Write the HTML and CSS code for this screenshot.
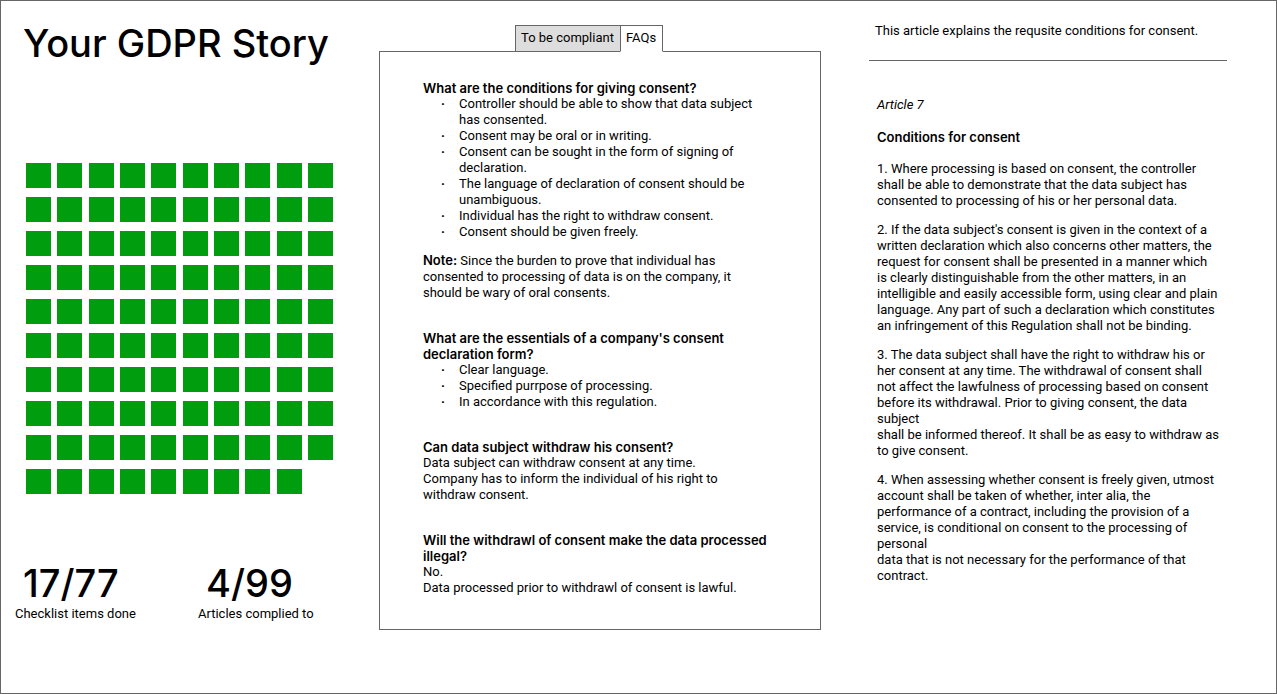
FILE: index.html
```
<!DOCTYPE html>
<html lang="en">
<head>
<meta charset="utf-8">
<meta name="viewport" content="width=device-width, initial-scale=1">
<title>Your GDPR Story</title>
<link rel="stylesheet" href="styles.css">
</head>
<body>
<div class="page">
  <aside class="story">
    <h1 class="story-title">Your GDPR Story</h1>
    <div class="squares" id="squares" role="img" aria-label="99 articles"></div>
    <dl class="stats">
      <div class="stat"><dd class="stat-value">17/77</dd><dt class="stat-label">Checklist items done</dt></div>
      <div class="stat"><dd class="stat-value">4/99</dd><dt class="stat-label">Articles complied to</dt></div>
    </dl>
  </aside>

  <main class="faq">
    <div class="tabs" role="tablist">
      <button class="tab" type="button" role="tab" id="tab-compliant" aria-selected="false">To be compliant</button>
      <button class="tab tab-active" type="button" role="tab" id="tab-faqs" aria-selected="true" aria-controls="panel-faqs">FAQs</button>
    </div>
    <div class="panel" id="panel-faqs" role="tabpanel" aria-labelledby="tab-faqs">
      <section class="entry">
        <h2 class="question">What are the conditions for giving consent?</h2>
        <ul class="points">
          <li>Controller should be able to show that data subject<br>has consented.</li>
          <li>Consent may be oral or in writing.</li>
          <li>Consent can be sought in the form of signing of<br>declaration.</li>
          <li>The language of declaration of consent should be<br>unambiguous.</li>
          <li>Individual has the right to withdraw consent.</li>
          <li>Consent should be given freely.</li>
        </ul>
        <p class="note"><strong>Note:</strong> Since the burden to prove that individual has<br>consented to processing of data is on the company, it<br>should be wary of oral consents.</p>
      </section>
      <section class="entry">
        <h2 class="question">What are the essentials of a company's consent<br>declaration form?</h2>
        <ul class="points">
          <li>Clear language.</li>
          <li>Specified purrpose of processing.</li>
          <li>In accordance with this regulation.</li>
        </ul>
      </section>
      <section class="entry">
        <h2 class="question">Can data subject withdraw his consent?</h2>
        <p>Data subject can withdraw consent at any time.<br>Company has to inform the individual of his right to<br>withdraw consent.</p>
      </section>
      <section class="entry">
        <h2 class="question">Will the withdrawl of consent make the data processed<br>illegal?</h2>
        <p>No.<br>Data processed prior to withdrawl of consent is lawful.</p>
      </section>
    </div>
  </main>

  <article class="article">
    <p class="summary">This article explains the requsite conditions for consent.</p>
    <div class="law">
      <p class="law-number">Article 7</p>
      <h2 class="question law-title">Conditions for consent</h2>
      <p>1. Where processing is based on consent, the controller<br>shall be able to demonstrate that the data subject has<br>consented to processing of his or her personal data.</p>
      <p>2. If the data subject's consent is given in the context of a<br>written declaration which also concerns other matters, the<br>request for consent shall be presented in a manner which<br>is clearly distinguishable from the other matters, in an<br>intelligible and easily accessible form, using clear and plain<br>language. Any part of such a declaration which constitutes<br>an infringement of this Regulation shall not be binding.</p>
      <p>3. The data subject shall have the right to withdraw his or<br>her consent at any time. The withdrawal of consent shall<br>not affect the lawfulness of processing based on consent<br>before its withdrawal. Prior to giving consent, the data<br>subject<br>shall be informed thereof. It shall be as easy to withdraw as<br>to give consent.</p>
      <p>4. When assessing whether consent is freely given, utmost<br>account shall be taken of whether, inter alia, the<br>performance of a contract, including the provision of a<br>service, is conditional on consent to the processing of<br>personal<br>data that is not necessary for the performance of that<br>contract.</p>
    </div>
  </article>
</div>
<script src="squares.js"></script>
</body>
</html>
```
FILE: styles.css
```
* {
  box-sizing: border-box;
}

body,
h1,
h2,
p,
ul,
dl,
dd {
  margin: 0;
  padding: 0;
}

body {
  background: #fff;
  color: #000;
  font: 13px/16px Roboto, "Liberation Sans", sans-serif;
}

.page {
  display: grid;
  grid-template-columns: 378fr 442fr 455fr;
  min-height: 100vh;
  border: 1px solid #666;
}

/* Progress column */

.story {
  padding: 18px 40px 0 14px;
}

.story-title {
  padding-left: 8px;
  font: 500 38px/48px Inter, sans-serif;
  white-space: nowrap;
}

.squares {
  display: grid;
  grid-template-columns: repeat(10, 25px);
  justify-content: space-between;
  row-gap: 9px;
  max-width: 307px;
  margin: 96px 0 0 11px;
}

.square {
  height: 25px;
  background: #009e0f;
}

.stats {
  display: grid;
  grid-template-columns: 183px auto;
  margin-top: 66px;
}

.stat {
  display: flex;
  flex-direction: column;
}

.stat-value {
  padding-left: 8px;
  font: 500 38px/46px Inter, sans-serif;
}

/* Questions column */

.faq {
  padding: 24px 0 32px;
}

.tabs {
  display: flex;
  padding-left: 136px;
}

.tab {
  height: 27px;
  margin: 0 0 -1px;
  padding: 0 6px 2px 5px;
  border: 1px solid #666;
  background: #ddd;
  color: inherit;
  font: inherit;
  cursor: pointer;
}

.tab-active {
  margin-left: -1px;
  border-bottom-color: #fff;
  background: #fff;
  position: relative;
}

.panel {
  padding: 28px 43px 33px;
  border: 1px solid #666;
}

.entry + .entry {
  margin-top: 29px;
}

.question,
strong {
  font-family: Inter, sans-serif;
  font-weight: 600;
}

.question {
  font-size: 13px;
  line-height: 16px;
}

.points {
  list-style: none;
}

.points li {
  display: flow-root;
  padding-left: 36px;
}

.points li::before {
  content: "·";
  float: left;
  margin-left: -18px;
  font-weight: 700;
}

.note {
  margin-top: 12px;
}

/* Article column */

.article {
  padding: 22px 49px 0 48px;
}

.summary {
  padding: 0 6px 21px;
  border-bottom: 1px solid #666;
}

.law {
  display: flex;
  flex-direction: column;
  gap: 13px;
  padding: 36px 0 0 8px;
  white-space: nowrap;
}

.law-number,
.law-title {
  margin-bottom: 3px;
}

.law-number {
  font-style: italic;
}
```
FILE: squares.js
```
const ARTICLE_COUNT = 99;
const squares = document.getElementById("squares");

for (let i = 0; i < ARTICLE_COUNT; i += 1) {
  const square = document.createElement("span");
  square.className = "square";
  squares.append(square);
}
```
